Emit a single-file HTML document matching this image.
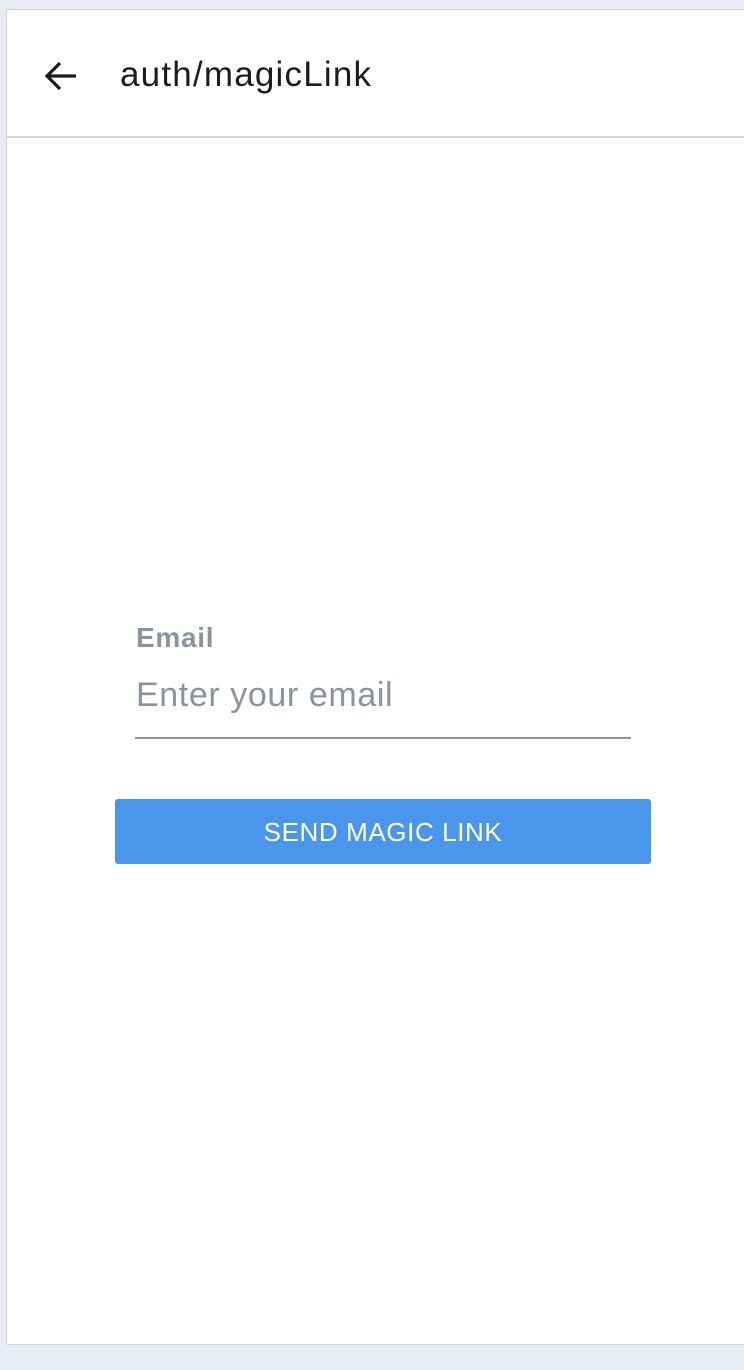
<!DOCTYPE html>
<html><head><style>
html,body{margin:0;padding:0;}
body{width:744px;height:1370px;background:#e9ebf2;position:relative;overflow:hidden;font-family:"Liberation Sans",sans-serif;}
.frame{position:absolute;left:6px;top:9px;width:750px;height:1336px;background:#fff;border:1px solid #d6d6da;box-sizing:border-box;}
.hdr{position:absolute;left:0;top:0;right:0;height:126px;border-bottom:2px solid #d8d8d8;}
.title{position:absolute;left:113px;top:45px;font-size:35px;letter-spacing:1.2px;color:#1c1c1e;}
.lbl{position:absolute;left:129px;top:612px;font-size:28px;letter-spacing:0.7px;font-weight:bold;color:#8a949e;}
.ph{position:absolute;left:129px;top:666px;font-size:34px;letter-spacing:0.6px;color:#8a949e;}
.ul{position:absolute;left:128px;top:727px;width:496px;height:2px;background:#8a949e;}
.btn{position:absolute;left:108px;top:789px;width:536px;height:65px;background:#4a96ec;border-radius:3px;color:#fff;font-size:26px;letter-spacing:0.6px;text-align:center;line-height:67px;}
</style></head><body>
<div class="frame">
<div class="hdr">
<svg style="position:absolute;left:36px;top:48px" width="36" height="36" viewBox="0 0 36 36"><path d="M33 18H4M17 5L4 18l13 13" fill="none" stroke="#1c1c1e" stroke-width="3.2"/></svg>
<div class="title">auth/magicLink</div>
</div>
<div class="lbl">Email</div>
<div class="ph">Enter your email</div>
<div class="ul"></div>
<div class="btn">SEND MAGIC LINK</div>
</div>
</body></html>
